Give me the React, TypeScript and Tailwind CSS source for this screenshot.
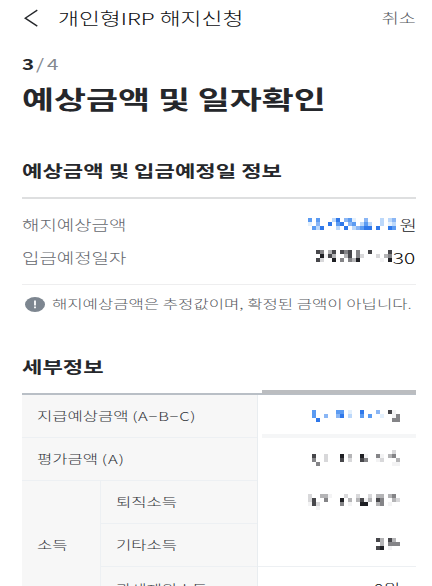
import type { ReactNode } from 'react';
import clsx from 'clsx';

const MOSAIC_COLORS: Record<string, string> = {
    a: '#2f78ea',
    b: '#5b9bf2',
    c: '#8ab6f5',
    d: '#bcd8fa',
    e: '#e3f0fd',
    k: '#1f2024',
    m: '#47474b',
    n: '#848487',
    o: '#b4b4b6',
    p: '#d8d8da',
    q: '#f3f3f4',
};

// Masked amounts, one letter per 4px cell
const MASKS = {
    amount: ['b.b...da.cbe..c...d.dc', 'e.c..a.ba.cb.dbd..d.ed', '.bda...d.a.dcbaa.a..ab'],
    date: ['mn.om.mnm.n..m....m', '.kqmo..om.np...p.on', 'mp..k.n.nok.....q.k'],
    payment: ['b.....bb.e..a...c..mq.', 'b..c..ca.d..b.b..e..qn', '.a..................nn'],
    valuation: ['....................p.', 'm..p...k.o..kq..nq.on.', 'n..p...m.p..mn..qp...o', '.n..................qq'],
    retirement: ['p..ooq...p..p..p.oo.on.', 'pm..n...k.o.omqo.mn..op', 'qmp.....n.q..kk..on.q..', '..q....................'],
    other: ['mo.mo.', '.o.nnn', 'mk.q..'],
};

interface TextProps {
    children: ReactNode;
    className?: string;
    right?: boolean;
}

const Text = ({ children, className, right }: TextProps) => (
    <span
        className={clsx(
            'inline-block scale-x-[1.37] whitespace-nowrap leading-none',
            right ? 'origin-right' : 'origin-left',
            className,
        )}
    >
        {children}
    </span>
);

const Mosaic = ({ rows, className }: { rows: string[]; className?: string }) => (
    <svg
        width={rows[0].length * 4}
        height={rows.length * 4}
        shapeRendering="crispEdges"
        className={clsx('shrink-0', className)}
    >
        {rows.map((row, y) =>
            row.split('').map((cell, x) =>
                cell === '.' ? null : (
                    <rect key={`${x}-${y}`} x={x * 4} y={y * 4} width={4} height={4} fill={MOSAIC_COLORS[cell]} />
                ),
            ),
        )}
    </svg>
);

const LabelCell = ({ children, className }: { children: ReactNode; className?: string }) => (
    <div className={clsx('flex items-center border-[#edf0f3] text-[12.1px] font-light text-[#303338]', className)}>
        <Text>{children}</Text>
    </div>
);

const App = () => {
    return (
        <div
            className="flex h-[586px] w-[432px] flex-col overflow-hidden bg-white pl-[22px] pr-4 text-[#25272b]"
            style={{ fontFamily: '"Noto Sans CJK KR", sans-serif' }}
        >
            {/* Header */}
            <header className="flex h-9 shrink-0 items-center">
                <svg width="15" height="18" viewBox="0 0 15 18" fill="none" className="ml-0.5 mr-[19px]">
                    <path d="M13.3 1.2 1.2 9.2l12.1 8" stroke="#25272b" strokeWidth="1.4" />
                </svg>
                <Text className="text-[16.6px] font-light text-[#0c0d10]">개인형IRP 해지신청</Text>
                <Text right className="ml-auto text-[13.5px] font-light text-[#55585e]">취소</Text>
            </header>

            <div className="mt-[18px] flex h-[18px] shrink-0 items-center text-[15px]">
                <Text className="w-[14px] font-bold">3</Text>
                <Text className="w-[11px] text-[#84898f]">/</Text>
                <Text className="text-[#84898f]">4</Text>
            </div>
            <h1 className="mt-px flex h-[52px] shrink-0 items-center text-[25.4px] font-bold">
                <Text>예상금액 및 일자확인</Text>
            </h1>

            {/* Summary */}
            <h2 className="mt-[34px] flex h-[22px] shrink-0 items-center text-[16.2px] font-bold">
                <Text>예상금액 및 입금예정일 정보</Text>
            </h2>
            <div className="mt-4 shrink-0 border-b border-t-2 border-b-[#eeeeef] border-t-[#dedfe0] pb-[10px] pt-[9px]">
                <div className="flex h-[33px] items-center text-[13.8px] text-[#65686e]">
                    <Text className="font-light">해지예상금액</Text>
                    <Mosaic rows={MASKS.amount} className="-mt-0.5 ml-auto mr-2" />
                    <Text right className="w-[12px] font-light text-[#17191c]">원</Text>
                </div>
                <div className="flex h-[33px] items-center text-[13.8px] text-[#65686e]">
                    <Text className="font-light">입금예정일자</Text>
                    <Mosaic rows={MASKS.date} className="-mt-[3px] ml-auto mr-[7px]" />
                    <Text right className="flex w-[17px] justify-end text-[15.3px] font-light text-black">30</Text>
                </div>
            </div>
            <div className="mt-2 flex h-[22px] shrink-0 items-center">
                <svg width="20" height="15" viewBox="0 0 20 15" className="ml-[3px] mr-[7px]">
                    <ellipse cx="10" cy="7.5" rx="10" ry="7.5" fill="#7d8690" />
                    <path d="M10 3.6v4.8M10 9.6v1.6" stroke="#fff" strokeWidth="1.8" />
                </svg>
                <Text className="text-[12.15px] font-light text-[#55585e]">
                    해지예상금액은 추정값이며, 확정된 금액이 아닙니다.
                </Text>
            </div>

            {/* Details */}
            <h2 className="mt-[40px] flex h-[22px] shrink-0 items-center text-[16.2px] font-bold">
                <Text>세부정보</Text>
            </h2>
            <div className="relative mt-4 flex h-[220px] shrink-0 border-t-2 border-[#b9bfc6]">
                <div className="w-[236px] border-r border-[#e9edf0] bg-[#f7f7f7]">
                    <LabelCell className="h-[43px] border-b pl-[15px]">
                        지급예상금액 <span className="tracking-[0.55px]">(A−B−C)</span>
                    </LabelCell>
                    <LabelCell className="h-[43px] border-b pl-[15px]">
                        평가금액 <span className="tracking-[0.8px]">(A)</span>
                    </LabelCell>
                    <div className="flex">
                        <LabelCell className="h-[129px] w-[79px] border-r pl-[15px]">소득</LabelCell>
                        <div className="flex-1">
                            <LabelCell className="h-[43px] border-b pl-[15px]">퇴직소득</LabelCell>
                            <LabelCell className="h-[43px] border-b pl-[15px]">기타소득</LabelCell>
                            <LabelCell className="h-[44px] pl-[15px]">과세제외소득</LabelCell>
                        </div>
                    </div>
                </div>
                <div className="flex flex-1 flex-col items-end pr-4">
                    <Mosaic rows={MASKS.payment} className="mt-[15px]" />
                    <Mosaic rows={MASKS.valuation} className="mt-7" />
                    <Mosaic rows={MASKS.retirement} className="mt-7" />
                    <Mosaic rows={MASKS.other} className="mt-7" />
                    <div className="mt-[17px] flex h-[44px] items-center">
                        <Text right className="text-[13.4px] font-light text-[#0c0d10]">0원</Text>
                    </div>
                </div>
                <div className="absolute -top-[5px] right-0 h-1 w-[154px] bg-[#bbbdc0]" />
                <div className="absolute right-0 top-[39px] h-1 w-[154px] bg-[#f5f6f7]" />
                <div className="absolute right-0 top-[171px] h-px w-[158px] bg-[#edf0f3]" />
            </div>
        </div>
    );
};

export default App;
